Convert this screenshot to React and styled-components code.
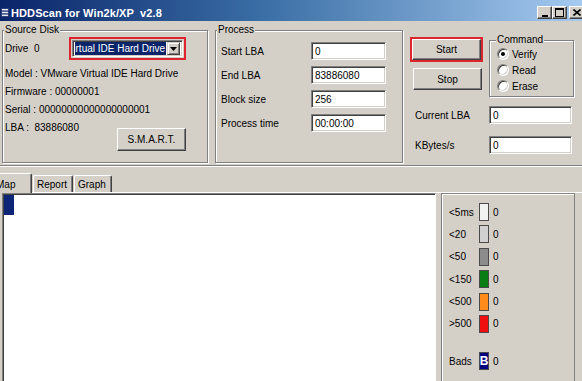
import React from "react";
import styled, { createGlobalStyle } from "styled-components";

const GlobalStyle = createGlobalStyle`
  html, body { margin: 0; padding: 0; background: #d4d0c8; }
  body { font-family: "Liberation Sans", Arial, sans-serif; font-size: 10px; color: #000; }
  * { box-sizing: border-box; }
`;

const Window = styled.div`
  width: 582px;
  height: 381px;
  overflow: hidden;
  background: #d4d0c8;
  display: flex;
  flex-direction: column;
`;

const TitleBar = styled.div`
  flex-shrink: 0;
  height: 21px;
  padding-top: 4px;
  padding-left: 1px;
  display: flex;
  align-items: center;
  background: linear-gradient(to right, #0a246a 0%, #3a6ea5 45%, #a6caf0 100%);
`;

const TitleText = styled.span`
  margin-left: 2px;
  color: #fff;
  font-weight: bold;
  font-size: 11px;
  white-space: pre;
  letter-spacing: 0.1px;
`;

const CaptionButtons = styled.div`
  margin-left: auto;
  margin-right: -2px;
  display: flex;
`;

const CaptionButton = styled.div`
  width: 15px;
  height: 13px;
  margin-left: ${(p) => p.$gap || 0}px;
  background: #d4d0c8;
  border: 1px solid;
  border-color: #fff #404040 #404040 #fff;
  box-shadow: inset -1px -1px 0 #808080;
  display: flex;
  align-items: center;
  justify-content: center;
`;

const TopPanel = styled.div`
  flex-shrink: 0;
  height: 145px;
  display: flex;
  align-items: flex-start;
  padding: 3px 0 0 2px;
  border-bottom: 1px solid #808080;
  box-shadow: 0 1px 0 #fff;
`;

const GroupBox = styled.fieldset`
  width: ${(p) => p.$w}px;
  height: ${(p) => p.$h}px;
  margin: 0 0 0 ${(p) => p.$ml || 0}px;
  padding: 0;
  min-width: 0;
  border: 1px solid #808080;
  box-shadow: inset 1px 1px 0 #fff, 1px 1px 0 #fff;
  flex-shrink: 0;
`;

const Caption = styled.legend`
  padding: 0 1px;
  margin-left: ${(p) => p.$ml || 1}px;
  font-size: 10px;
  line-height: 12px;
  background: #d4d0c8;
`;

const SourceBody = styled.div`
  display: flex;
  flex-direction: column;
  padding: 1px 21px 0 2px;
`;

const DriveRow = styled.div`
  display: flex;
  align-items: center;
  height: 23px;
`;

const DriveLabel = styled.span`
  width: 65px;
  white-space: pre;
`;

const Highlight = styled.div`
  border: 2px solid #dc252c;
  padding: ${(p) => p.$pad || 0}px;
  display: flex;
`;

const Combo = styled.div`
  width: 111px;
  height: 17px;
  display: flex;
  gap: 1px;
  background: #fff;
  border: 1px solid;
  border-color: #808080 #fff #fff #808080;
  box-shadow: inset 1px 1px 0 #404040, inset -1px -1px 0 #d4d0c8;
  padding: 1px 2px 1px 2px;
`;

const ComboText = styled.div`
  flex: 1;
  min-width: 0;
  overflow: hidden;
  display: flex;
  justify-content: flex-end;
  background: #0a246a;
  color: #fff;
  white-space: nowrap;
  line-height: 13px;
  padding-right: 1px;
`;

const ComboArrow = styled.div`
  width: 13px;
  height: 13px;
  flex-shrink: 0;
  background: #d4d0c8;
  border: 1px solid;
  border-color: #d4d0c8 #404040 #404040 #d4d0c8;
  box-shadow: inset 1px 1px 0 #fff, inset -1px -1px 0 #808080;
  display: flex;
  align-items: center;
  justify-content: center;
`;

const InfoList = styled.div`
  margin-top: 5px;
  display: flex;
  flex-direction: column;
`;

const InfoLine = styled.div`
  line-height: 18px;
  white-space: pre;
`;

const LbaRow = styled.div`
  display: flex;
  justify-content: space-between;
  align-items: flex-start;
`;

const PushButton = styled.button`
  width: ${(p) => p.$w}px;
  height: ${(p) => p.$h}px;
  margin: ${(p) => p.$m || "0"};
  padding: 0;
  background: #d4d0c8;
  border: 1px solid;
  border-color: #fff #404040 #404040 #fff;
  box-shadow: inset -1px -1px 0 #808080;
  font-family: "Liberation Sans", Arial, sans-serif;
  font-size: 10px;
  color: #000;
  flex-shrink: 0;
`;

const ProcessBody = styled.div`
  display: flex;
  flex-direction: column;
  padding: 3px 0 0 5px;
`;

const FieldRow = styled.div`
  display: flex;
  align-items: center;
  height: ${(p) => p.$h || 24}px;
  margin-top: ${(p) => p.$mt || 0}px;
  padding-left: ${(p) => p.$pl || 0}px;
`;

const FieldLabel = styled.span`
  width: ${(p) => p.$w}px;
  flex-shrink: 0;
`;

const Field = styled.input`
  width: ${(p) => p.$w}px;
  height: 18px;
  margin: 0;
  padding: 0 0 0 3px;
  background: #fff;
  border: 1px solid;
  border-color: #808080 #fff #fff #808080;
  box-shadow: inset 1px 1px 0 #404040, inset -1px -1px 0 #d4d0c8;
  font-family: "Liberation Sans", Arial, sans-serif;
  font-size: 10px;
  color: #000;
  outline: none;
`;

const RightColumn = styled.div`
  margin-left: 7px;
  display: flex;
  flex-direction: column;
`;

const RightTop = styled.div`
  margin-top: 10px;
  display: flex;
  align-items: flex-start;
`;

const ButtonColumn = styled.div`
  display: flex;
  flex-direction: column;
  padding-top: 3px;
`;

const RadioList = styled.div`
  display: flex;
  flex-direction: column;
  padding-left: 7px;
`;

const RadioRow = styled.div`
  height: 16px;
  display: flex;
  align-items: center;
  gap: 3px;
`;

const RadioDot = styled.span`
  width: 12px;
  height: 12px;
  border-radius: 50%;
  background: #fff;
  border: 1px solid;
  border-color: #808080 #fff #fff #808080;
  box-shadow: inset 1px 1px 0 #404040, inset -1px -1px 0 #d4d0c8;
  display: flex;
  align-items: center;
  justify-content: center;
  &::after {
    content: "";
    width: 4px;
    height: 4px;
    border-radius: 50%;
    background: ${(p) => (p.$checked ? "#000" : "transparent")};
  }
`;

const TabStrip = styled.div`
  flex-shrink: 0;
  height: 26px;
  display: flex;
  align-items: flex-end;
  gap: 1px;
`;

const Tab = styled.div`
  position: relative;
  z-index: ${(p) => (p.$active ? 1 : 0)};
  width: ${(p) => p.$w}px;
  height: ${(p) => (p.$active ? 20 : 17)}px;
  margin-left: ${(p) => p.$ml || 0}px;
  margin-bottom: ${(p) => (p.$active ? -1 : 0)}px;
  padding: 1px 0 0 ${(p) => p.$pl || 3}px;
  background: #d4d0c8;
  border: 1px solid;
  border-bottom: none;
  border-color: #fff #404040 #404040 #fff;
  box-shadow: inset -1px 0 0 #808080;
  border-radius: 2px 2px 0 0;
  display: flex;
  align-items: center;
  flex-shrink: 0;
`;

const TabPanel = styled.div`
  flex: 1;
  display: flex;
  border-top: 1px solid #fff;
  padding: 0 7px 0 2px;
  margin-bottom: -8px;
  gap: 5px;
`;

const MapArea = styled.div`
  flex: 1;
  background: #fff;
  border: 1px solid;
  border-color: #808080 #fff #fff #808080;
  box-shadow: inset 1px 1px 0 #404040;
  padding: 1px 0 0 1px;
`;

const MapBlock = styled.div`
  width: 10px;
  height: 20px;
  background: #0c2577;
`;

const LegendPanel = styled.div`
  width: 134px;
  flex-shrink: 0;
  border: 1px solid #808080;
  box-shadow: inset 1px 1px 0 #fff;
  padding: 9px 0 0 7px;
  display: flex;
  flex-direction: column;
  gap: 4.4px;
`;

const LegendRow = styled.div`
  height: 18px;
  display: flex;
  align-items: center;
  margin-top: ${(p) => p.$mt || 0}px;
`;

const LegendLabel = styled.span`
  width: 30px;
`;

const Swatch = styled.span`
  width: 10px;
  height: 18px;
  margin-right: 4px;
  background: ${(p) => p.$color};
  border: 1px solid #4a4a4a;
  color: #fff;
  font-weight: bold;
  font-size: 12px;
  display: flex;
  align-items: center;
  justify-content: center;
`;

const TitleIcon = () => (
  <svg width="8" height="11" viewBox="0 0 8 11">
    <rect x="0" y="1" width="8" height="9" fill="#2b3f7a" />
    <rect x="1" y="2" width="6" height="1.4" fill="#e8e8f0" />
    <rect x="1" y="4.8" width="6" height="1.4" fill="#e8e8f0" />
    <rect x="1" y="7.6" width="6" height="1.4" fill="#e8e8f0" />
  </svg>
);

const legendItems = [
  { label: "<5ms", color: "#f2f2f2" },
  { label: "<20", color: "#d0d0d0" },
  { label: "<50", color: "#8c8c8c" },
  { label: "<150", color: "#0a7d14" },
  { label: "<500", color: "#ff8c1a" },
  { label: ">500", color: "#ee1010" },
];

export default function App() {
  return (
    <>
      <GlobalStyle />
      <Window>
        <TitleBar>
          <TitleIcon />
          <TitleText>{"HDDScan for Win2k/XP  v2.8"}</TitleText>
          <CaptionButtons>
            <CaptionButton>
              <svg width="8" height="8" viewBox="0 0 8 8">
                <rect x="1" y="6" width="6" height="2" fill="#000" />
              </svg>
            </CaptionButton>
            <CaptionButton>
              <svg width="9" height="9" viewBox="0 0 9 9">
                <rect x="0.5" y="0.5" width="8" height="8" fill="none" stroke="#000" />
                <rect x="0" y="0" width="9" height="2" fill="#000" />
              </svg>
            </CaptionButton>
            <CaptionButton $gap={2}>
              <svg width="8" height="7" viewBox="0 0 8 7">
                <path d="M0.5 0.5 L7.5 6.5 M7.5 0.5 L0.5 6.5" stroke="#000" strokeWidth="1.6" />
              </svg>
            </CaptionButton>
          </CaptionButtons>
        </TitleBar>

        <TopPanel>
          <GroupBox $w={206} $h={139}>
            <Caption>Source Disk</Caption>
            <SourceBody>
              <DriveRow>
                <DriveLabel>{"Drive  0"}</DriveLabel>
                <Highlight $pad={1}>
                  <Combo>
                    <ComboText>Virtual IDE Hard Drive</ComboText>
                    <ComboArrow>
                      <svg width="7" height="4" viewBox="0 0 7 4">
                        <path d="M0 0 H7 L3.5 4 Z" fill="#000" />
                      </svg>
                    </ComboArrow>
                  </Combo>
                </Highlight>
              </DriveRow>
              <InfoList>
                <InfoLine>Model : VMware Virtual IDE Hard Drive</InfoLine>
                <InfoLine>Firmware : 00000001</InfoLine>
                <InfoLine>Serial : 00000000000000000001</InfoLine>
                <LbaRow>
                  <InfoLine>{"LBA :  83886080"}</InfoLine>
                  <PushButton $w={69} $h={23} $m="9px 0 0 0">S.M.A.R.T.</PushButton>
                </LbaRow>
              </InfoList>
            </SourceBody>
          </GroupBox>

          <GroupBox $w={188} $h={139} $ml={7}>
            <Caption>Process</Caption>
            <ProcessBody>
              <FieldRow>
                <FieldLabel $w={90}>Start LBA</FieldLabel>
                <Field $w={75} readOnly value="0" />
              </FieldRow>
              <FieldRow>
                <FieldLabel $w={90}>End LBA</FieldLabel>
                <Field $w={75} readOnly value="83886080" />
              </FieldRow>
              <FieldRow>
                <FieldLabel $w={90}>Block size</FieldLabel>
                <Field $w={75} readOnly value="256" />
              </FieldRow>
              <FieldRow>
                <FieldLabel $w={90}>Process time</FieldLabel>
                <Field $w={75} readOnly value="00:00:00" />
              </FieldRow>
            </ProcessBody>
          </GroupBox>

          <RightColumn>
            <RightTop>
              <ButtonColumn>
                <Highlight>
                  <PushButton $w={69} $h={21}>Start</PushButton>
                </Highlight>
                <PushButton $w={69} $h={22} $m="6px 0 0 3px">Stop</PushButton>
              </ButtonColumn>
              <GroupBox $w={85} $h={63} $ml={6}>
                <Caption $ml={6}>Command</Caption>
                <RadioList>
                  <RadioRow>
                    <RadioDot $checked />
                    <span>Verify</span>
                  </RadioRow>
                  <RadioRow>
                    <RadioDot />
                    <span>Read</span>
                  </RadioRow>
                  <RadioRow>
                    <RadioDot />
                    <span>Erase</span>
                  </RadioRow>
                </RadioList>
              </GroupBox>
            </RightTop>
            <FieldRow $h={18} $mt={9} $pl={5}>
              <FieldLabel $w={74}>Current LBA</FieldLabel>
              <Field $w={83} readOnly value="0" />
            </FieldRow>
            <FieldRow $h={18} $mt={12} $pl={5}>
              <FieldLabel $w={74}>KBytes/s</FieldLabel>
              <Field $w={83} readOnly value="0" />
            </FieldRow>
          </RightColumn>
        </TopPanel>

        <TabStrip>
          <Tab $active $w={40} $ml={-8} $pl={3}>Map</Tab>
          <Tab $w={40} $pl={3}>Report</Tab>
          <Tab $w={38} $pl={3}>Graph</Tab>
        </TabStrip>

        <TabPanel>
          <MapArea>
            <MapBlock />
          </MapArea>
          <LegendPanel>
            {legendItems.map((it) => (
              <LegendRow key={it.label}>
                <LegendLabel>{it.label}</LegendLabel>
                <Swatch $color={it.color} />
                <span>0</span>
              </LegendRow>
            ))}
            <LegendRow $mt={15}>
              <LegendLabel>Bads</LegendLabel>
              <Swatch $color="#000080">B</Swatch>
              <span>0</span>
            </LegendRow>
          </LegendPanel>
        </TabPanel>
      </Window>
    </>
  );
}
